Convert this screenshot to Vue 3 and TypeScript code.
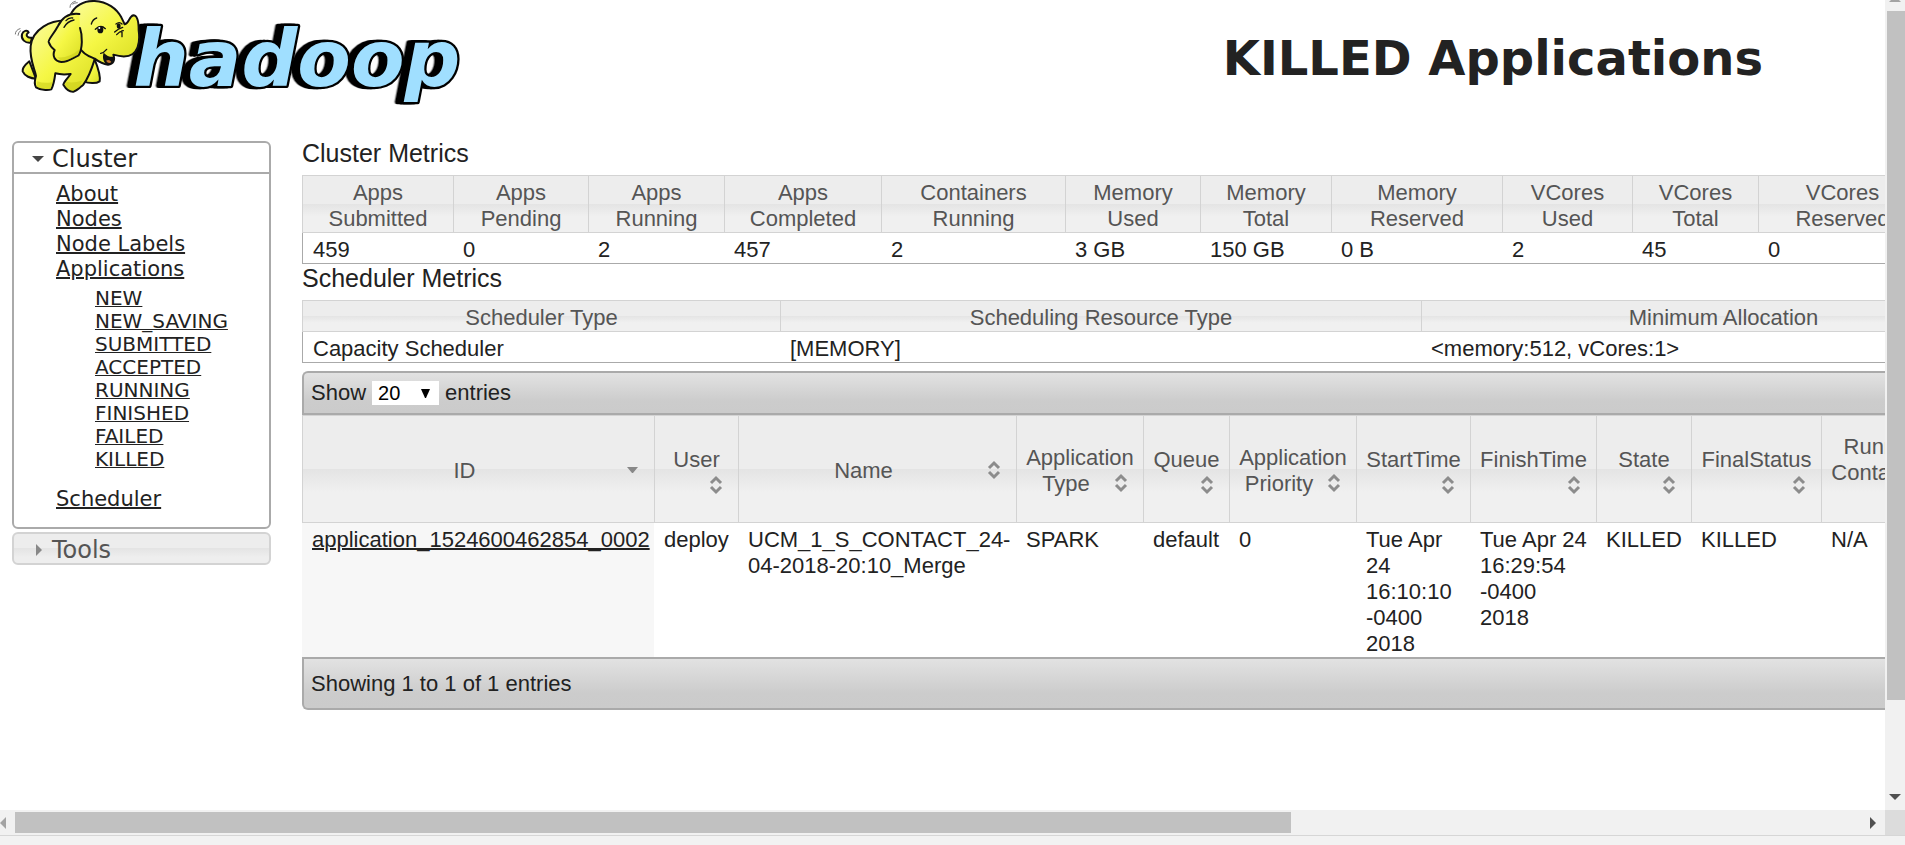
<script setup lang="ts">
import { ref } from 'vue'

interface Metric {
  head: string[]
  value: string
  width: number
}
interface Column {
  label: string
  value: string
  width: number
  sorted?: boolean
}

const states: string[] = ['NEW', 'NEW_SAVING', 'SUBMITTED', 'ACCEPTED', 'RUNNING', 'FINISHED', 'FAILED', 'KILLED']

const clusterMetrics: Metric[] = [
  { head: ['Apps', 'Submitted'], value: '459', width: 151 },
  { head: ['Apps', 'Pending'], value: '0', width: 135 },
  { head: ['Apps', 'Running'], value: '2', width: 136 },
  { head: ['Apps', 'Completed'], value: '457', width: 157 },
  { head: ['Containers', 'Running'], value: '2', width: 184 },
  { head: ['Memory', 'Used'], value: '3 GB', width: 135 },
  { head: ['Memory', 'Total'], value: '150 GB', width: 131 },
  { head: ['Memory', 'Reserved'], value: '0 B', width: 171 },
  { head: ['VCores', 'Used'], value: '2', width: 130 },
  { head: ['VCores', 'Total'], value: '45', width: 126 },
  { head: ['VCores', 'Reserved'], value: '0', width: 168 },
]

const schedulerMetrics: Metric[] = [
  { head: ['Scheduler Type'], value: 'Capacity Scheduler', width: 478 },
  { head: ['Scheduling Resource Type'], value: '[MEMORY]', width: 641 },
  { head: ['Minimum Allocation'], value: '<memory:512, vCores:1>', width: 604 },
]

const columns: Column[] = [
  { label: 'ID', value: 'application_1524600462854_0002', width: 352, sorted: true },
  { label: 'User', value: 'deploy', width: 84 },
  { label: 'Name', value: 'UCM_1_S_CONTACT_24-04-2018-20:10_Merge', width: 278 },
  { label: 'Application Type', value: 'SPARK', width: 127 },
  { label: 'Queue', value: 'default', width: 86 },
  { label: 'Application Priority', value: '0', width: 127 },
  { label: 'StartTime', value: 'Tue Apr 24 16:10:10 -0400 2018', width: 114 },
  { label: 'FinishTime', value: 'Tue Apr 24 16:29:54 -0400 2018', width: 126 },
  { label: 'State', value: 'KILLED', width: 95 },
  { label: 'FinalStatus', value: 'KILLED', width: 130 },
  { label: 'Running Containers', value: 'N/A', width: 126 },
]

const tables = [
  { title: 'Cluster Metrics', metrics: clusterMetrics },
  { title: 'Scheduler Metrics', metrics: schedulerMetrics },
]
const total = (list: { width: number }[]): string => list.reduce((sum, c) => sum + c.width, 0) + 'px'
const pageSize = ref('20')
</script>

<template>
  <div class="window">
    <div class="viewport">
      <div class="page">
        <header class="top">
          <a href="#" class="brand" aria-label="Hadoop">
            <svg class="logo" viewBox="0 0 1440 330" aria-hidden="true">
              <defs>
                <linearGradient id="skin" x1="0" y1="0" x2="1" y2="1">
                  <stop offset="0" stop-color="#fbfca0" />
                  <stop offset="0.5" stop-color="#f5f745" />
                  <stop offset="1" stop-color="#d9dc22" />
                </linearGradient>
              </defs>
              <text class="wordmark" x="400" y="258">hadoop</text>
              <g fill="url(#skin)" stroke="#111" stroke-width="6" stroke-linejoin="round" stroke-linecap="round">
                <path d="M92 128C76 130 62 118 66 103C69 92 82 88 86 97C74 104 82 116 96 113Z" />
                <path d="M88 184C76 194 66 205 68 214C74 228 92 236 108 236Z" />
                <path d="M284 178C292 198 302 228 299 244C288 252 266 250 250 244Z" />
                <path d="M205 62C150 58 98 88 92 138C88 178 104 206 108 228C104 240 102 252 108 262C122 270 142 272 154 268C162 252 164 236 166 220C180 224 196 224 212 222C204 234 192 244 190 254C196 264 204 276 220 275C232 272 240 262 250 254C262 238 274 210 284 178Z" />
                <path d="M210 48C222 18 250 2 284 3C322 5 350 26 364 52C368 60 371 66 374 73C388 70 386 50 400 46C412 46 416 66 416 90C420 120 416 148 398 162C382 173 360 170 340 164C346 180 340 192 324 194C306 192 292 182 284 176C266 170 246 160 238 140Z" />
                <path d="M238 42C208 38 186 54 174 78C160 104 144 118 146 126C150 138 158 146 164 150C156 168 164 184 184 186C208 186 220 172 236 166C248 146 248 106 240 84" />
              </g>
              <path d="M311 158C320 168 332 172 342 170C342 182 336 192 324 194C310 190 306 172 311 158Z" fill="#111" />
              <path d="M318 182Q328 176 334 186Q326 194 318 182Z" fill="#c8762c" />
              <g fill="none" stroke="#111" stroke-width="4" stroke-linecap="round">
                <path d="M302 160Q312 158 320 148M274 72Q278 58 290 54M286 88Q302 72 316 86M348 72Q358 64 366 72M344 96Q354 86 368 82M350 104Q358 94 370 92M366 92V110M198 62Q206 52 218 54M192 82Q202 64 222 60" />
                <path d="M210 22Q210 8 226 4M218 12Q224 8 232 8M46 102Q46 90 60 86M54 106Q54 96 62 92" stroke="#777" stroke-width="3" />
              </g>
              <ellipse cx="301" cy="89" rx="9" ry="11" fill="#111" />
              <circle cx="298" cy="84" r="3" fill="#fff" />
              <ellipse cx="356" cy="78" rx="6" ry="8" fill="#111" />
              <path d="M112 244Q132 252 158 246L152 266Q128 270 110 260ZM200 246Q222 250 246 242L240 260L220 272Q204 270 194 254ZM172 172Q206 176 240 146L234 164Q206 182 184 182Z" fill="#c9cc18" opacity="0.55" />
            </svg>
          </a>
          <h1 class="title">KILLED Applications</h1>
        </header>

        <div class="body">
          <nav class="side">
            <section class="group open">
              <h3 class="group-head">
                <button type="button" aria-expanded="true">
                  <svg class="caret" viewBox="0 0 12 12" aria-hidden="true"><path d="M0 3H12L6 9Z" fill="#454545" /></svg>
                  Cluster
                </button>
              </h3>
              <ul class="links">
                <li><a href="#">About</a></li>
                <li><a href="#">Nodes</a></li>
                <li><a href="#">Node Labels</a></li>
                <li>
                  <a href="#">Applications</a>
                  <ul class="states">
                    <li v-for="s in states" :key="s"><a href="#">{{ s }}</a></li>
                  </ul>
                </li>
                <li><a href="#">Scheduler</a></li>
              </ul>
            </section>
            <section class="group closed">
              <h3 class="group-head">
                <button type="button" aria-expanded="false">
                  <svg class="caret" viewBox="0 0 12 12" aria-hidden="true"><path d="M4 0V12L10 6Z" fill="#888" /></svg>
                  Tools
                </button>
              </h3>
            </section>
          </nav>

          <main class="content">
            <template v-for="t in tables" :key="t.title">
              <h2 class="section-title">{{ t.title }}</h2>
              <table class="metrics" :style="{ width: total(t.metrics) }">
                <colgroup><col v-for="(m, i) in t.metrics" :key="i" :style="{ width: m.width + 'px' }" /></colgroup>
                <thead>
                  <tr>
                    <th v-for="(m, i) in t.metrics" :key="i" scope="col">
                      <div v-for="line in m.head" :key="line">{{ line }}</div>
                    </th>
                  </tr>
                </thead>
                <tbody>
                  <tr><td v-for="(m, i) in t.metrics" :key="i">{{ m.value }}</td></tr>
                </tbody>
              </table>
            </template>

            <div class="bar bar-top">
              <label for="page-size">Show</label>
              <span class="picker">
                <select id="page-size" v-model="pageSize">
                  <option>20</option>
                </select>
                <svg viewBox="0 0 9 9" aria-hidden="true"><path d="M0 0H9L5 9H4Z" fill="#000" /></svg>
              </span>
              <span>entries</span>
            </div>

            <table class="apps" :style="{ width: total(columns) }">
              <colgroup><col v-for="c in columns" :key="c.label" :style="{ width: c.width + 'px' }" /></colgroup>
              <thead>
                <tr>
                  <th v-for="c in columns" :key="c.label" scope="col">
                    <div class="sorter">
                      {{ c.label }}
                      <svg v-if="c.sorted" class="sort" viewBox="0 0 28 20" aria-hidden="true"><path d="M9 7H20L15 13H14Z" fill="#888" /></svg>
                      <svg v-else class="sort" viewBox="0 0 28 20" aria-hidden="true">
                        <path d="M9 8L14 3L19 8M9 12L14 17L19 12" fill="none" stroke="#8c8c8c" stroke-width="3" />
                      </svg>
                    </div>
                  </th>
                </tr>
              </thead>
              <tbody>
                <tr>
                  <td v-for="c in columns" :key="c.label" :class="{ sorted: c.sorted }">
                    <a v-if="c.sorted" href="#">{{ c.value }}</a>
                    <template v-else>{{ c.value }}</template>
                  </td>
                </tr>
              </tbody>
            </table>

            <div class="bar bar-bottom">Showing 1 to 1 of 1 entries</div>
          </main>
        </div>
      </div>

      <div class="vscroll" aria-hidden="true">
        <svg class="arrow-up" viewBox="0 0 12 3"><path d="M2 0H10L12 2H0Z" fill="#a3a3a3" /></svg>
        <div class="vthumb"></div>
        <svg class="arrow-down" viewBox="0 0 12 6"><path d="M0 0H12L6 6Z" fill="#505050" /></svg>
      </div>
    </div>

    <div class="hrow" aria-hidden="true">
      <div class="hscroll">
        <svg class="arrow-side" viewBox="0 0 6 12"><path d="M6 0V12L0 6Z" fill="#a3a3a3" /></svg>
        <div class="hthumb"></div>
        <svg class="arrow-side" viewBox="0 0 6 12"><path d="M0 0V12L6 6Z" fill="#505050" /></svg>
      </div>
      <div class="corner"></div>
    </div>
    <div class="edge"></div>
  </div>
</template>

<style>
body {
  margin: 0;
  background: #fff;
}
</style>

<style scoped>
.window {
  display: flex;
  flex-direction: column;
  height: 100vh;
  overflow: hidden;
  color: #222;
  font-family: "Liberation Sans", Arial, sans-serif;
  font-size: 22px;
  line-height: 26px;
}
.window a {
  color: #222;
}
.viewport {
  flex: 1;
  display: flex;
  min-height: 0;
}
.page {
  flex: 1;
  min-width: 0;
  overflow: hidden;
}

.top {
  display: flex;
  justify-content: space-between;
  align-items: flex-start;
  height: 139px;
  padding-right: 122px;
}
.brand {
  display: block;
}
.logo {
  display: block;
  width: 480px;
  height: 110px;
}
.wordmark {
  font-family: "DejaVu Sans", Verdana, sans-serif;
  font-size: 234px;
  font-weight: bold;
  font-style: italic;
  fill: #a0dfff;
  stroke: #000;
  stroke-width: 14px;
  stroke-linejoin: round;
  paint-order: stroke;
  filter: drop-shadow(-10px 0 0 #000) drop-shadow(-10px 0 0 #000);
}
.title {
  margin: 0;
  padding-top: 30px;
  font-family: "DejaVu Sans", Verdana, sans-serif;
  font-size: 48px;
  line-height: 56px;
  font-weight: bold;
  white-space: nowrap;
}

.body {
  display: flex;
  gap: 31px;
  padding-left: 12px;
}
.side {
  flex: 0 0 259px;
  padding-top: 2px;
  font-family: "DejaVu Sans", Verdana, sans-serif;
}
.group {
  box-sizing: border-box;
  border: 2px solid #aaa;
  border-radius: 6px;
  overflow: hidden;
}
.group-head {
  margin: 0;
  font-weight: normal;
}
.group-head button {
  display: flex;
  align-items: center;
  gap: 8px;
  width: 100%;
  height: 29px;
  padding: 3px 0 0 18px;
  border: 0;
  background: none;
  color: #222;
  font-family: inherit;
  font-size: 24px;
  line-height: 26px;
}
.caret {
  width: 12px;
  height: 12px;
}
.open .group-head {
  border-bottom: 2px solid #aaa;
}
.closed {
  margin-top: 3px;
  border-color: #d3d3d3;
  background: linear-gradient(#ededed 50%, #e4e4e4 50%, #eee 80%);
}
.closed .group-head button {
  color: #555;
}
.links,
.states {
  margin: 0;
  padding: 0;
  list-style: none;
}
.links {
  padding: 8px 0 15px 42px;
  font-size: 21px;
  line-height: 25px;
}
.links a {
  text-decoration-thickness: 2px;
}
.states {
  padding: 5px 0 16px 39px;
  font-size: 20px;
  line-height: 23px;
}
.states a {
  text-decoration-thickness: 1px;
}

.content {
  flex: 1;
  min-width: 0;
  overflow: hidden;
}
.section-title {
  margin: 0;
  padding-bottom: 8px;
  font-size: 25px;
  line-height: 28px;
  font-weight: normal;
}
table {
  table-layout: fixed;
  border-collapse: separate;
  border-spacing: 0;
}
th {
  padding: 4px 8px 0;
  border: solid #d3d3d3;
  border-width: 1px 0 1px 1px;
  background: linear-gradient(#ededed 50%, #e4e4e4 50%, #f0f0f0 72%);
  color: #555;
  font-weight: normal;
}
td {
  padding: 4px 6px 0 10px;
  vertical-align: top;
}
.metrics {
  border-bottom: 1px solid #aaa;
}
.metrics td:first-child {
  border-left: 1px solid #aaa;
}
.apps th {
  height: 102px;
}
.sorter::after {
  content: "";
  display: block;
  clear: both;
}
.sort {
  float: right;
  width: 28px;
  height: 20px;
  margin-top: 2px;
}
.apps td.sorted {
  background: #f7f7f7;
}
.apps td a {
  text-decoration-thickness: 2px;
}

.bar {
  border: 2px solid #aaa;
  border-right-width: 0;
  background: linear-gradient(#e2e2e2, #ccc 70%, #cbcbcb);
}
.bar-top {
  display: flex;
  align-items: center;
  gap: 6px;
  margin-top: 8px;
  padding: 7px;
  border-radius: 6px 0 0;
}
.bar-bottom {
  padding: 12px 7px 11px;
  border-radius: 0 0 0 6px;
}
.picker {
  position: relative;
  display: flex;
}
.picker select {
  appearance: none;
  width: 67px;
  height: 24px;
  padding: 0 6px;
  border: 0;
  border-radius: 0;
  background: #fff;
  color: #000;
  font-family: inherit;
  font-size: 20px;
  line-height: 24px;
}
.picker svg {
  position: absolute;
  right: 9px;
  top: 8px;
  width: 9px;
  height: 9px;
  pointer-events: none;
}

.vscroll {
  display: flex;
  flex-direction: column;
  align-items: center;
  width: 20px;
  background: #f1f1f1;
}
.arrow-up {
  width: 12px;
  height: 3px;
  margin-bottom: 8px;
}
.vthumb {
  align-self: flex-end;
  width: 18px;
  height: 85%;
  background: #c1c1c1;
}
.arrow-down {
  width: 12px;
  height: 6px;
  margin: auto 0 10px;
}
.hrow {
  display: flex;
  height: 25px;
}
.hscroll {
  flex: 1;
  display: flex;
  align-items: center;
  padding-right: 9px;
  background: #f1f1f1;
}
.hthumb {
  width: 68%;
  height: 21px;
  margin: 0 auto 0 9px;
  background: #c1c1c1;
}
.arrow-side {
  width: 6px;
  height: 12px;
}
.corner {
  width: 20px;
  background: #dcdcdc;
}
.edge {
  height: 9px;
  border-top: 1px solid #d6d6d6;
  background: #f2f2f2;
}
</style>
